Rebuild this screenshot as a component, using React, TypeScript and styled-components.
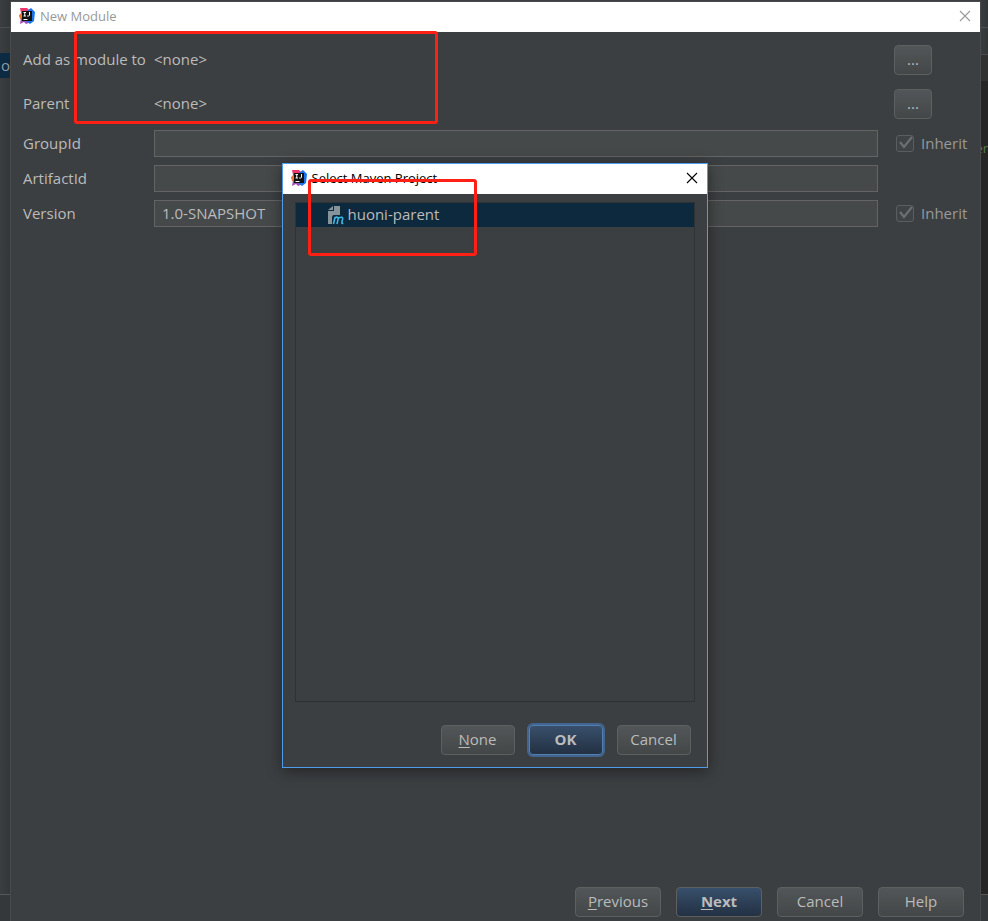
import React from "react";
import styled, { createGlobalStyle, css } from "styled-components";

const GlobalStyle = createGlobalStyle`
  *, *::before, *::after { box-sizing: border-box; }
  body {
    margin: 0;
    background: #3c3f41;
    color: #bbbbbb;
    font: 15px/20px "Open Sans", "Noto Sans", sans-serif;
  }
  button, input { font: inherit; color: inherit; margin: 0; }
`;

const Desktop = styled.div`
  position: relative;
  display: grid;
  grid-template-columns: 11px minmax(0, 1fr) 8px;
  min-height: 100vh;
  overflow: hidden;
`;

const Strip = styled.div`
  display: flex;
  flex-direction: column;
  overflow: hidden;
  background: linear-gradient(90deg, #3a3e40, #333637);
`;

const TopBar = styled.div`
  height: 28px;
  border-bottom: 1px solid #4b4e50;
`;

const NavBar = styled.div<{ $lined?: boolean }>`
  height: ${(p) => (p.$lined ? 27 : 25)}px;
  border-bottom: ${(p) => (p.$lined ? "1px solid #4b4b4b" : "0")};
`;

const TreeRow = styled.div`
  height: 25px;
  padding: 2px 0 0 1px;
  background: #0c2a41;
  color: #8f9ba3;
`;

const EditorTabs = styled.div`
  height: 26px;
  background: #313131;
`;

const Editor = styled.div`
  display: flex;
  flex: 1;
  justify-content: flex-end;
  padding-top: 57px;
  background: #262626;
  color: #547a48;
  font-size: 13px;
`;

const StatusBar = styled.div`
  height: 27px;
  margin-top: auto;
  border-top: 1px solid #575757;
  background: #34383a;
`;

const Window = styled.main`
  position: relative;
  display: flex;
  flex-direction: column;
  margin-top: 2px;
  background: #3c3f41;
  box-shadow: 0 0 0 1px #484a4c;
`;

const TitleBar = styled.header<{ $active?: boolean }>`
  display: flex;
  align-items: center;
  height: 30px;
  padding: 0 9px 2px 8px;
  background: #ffffff;
  color: ${(p) => (p.$active ? "#000000" : "#999999")};
  font-size: 13px;
`;

const Title = styled.h1`
  flex: 1;
  margin: 0 0 0 5px;
  font-size: inherit;
  font-weight: 400;
`;

const CloseButton = styled.button`
  display: flex;
  padding: 0;
  border: 0;
  background: none;
`;

const Form = styled.form`
  display: flex;
  flex: 1;
  flex-direction: column;
  padding: 13px 15px 0 12px;
`;

const FormRow = styled.div<{ $space: number }>`
  display: grid;
  grid-template-columns: 131px minmax(0, 1fr) 87px;
  align-items: center;
  margin-bottom: ${(p) => p.$space}px;
`;

const Name = styled.span`
  padding-bottom: 2px;
  white-space: nowrap;
`;

const TextField = styled.input`
  width: 100%;
  height: 27px;
  padding: 0 7px 1px;
  border: 1px solid #646464;
  border-radius: 0;
  background: #45494a;
`;

const Side = styled.div`
  display: flex;
  padding-left: 16px;
`;

const InheritLabel = styled.label`
  display: flex;
  align-items: center;
  gap: 7px;
  padding-left: 18px;
  color: #999999;
`;

const CheckBox = styled.input`
  appearance: none;
  width: 18px;
  height: 17px;
  border: 1px solid #5b5e60;
  border-radius: 3px;
  background: #3f4345;
`;

const CheckWrap = styled.span`
  position: relative;
  display: flex;
  svg { position: absolute; inset: 0; pointer-events: none; }
`;

const Button = styled.button<{ $width: number; $primary?: boolean; $focused?: boolean }>`
  width: ${(p) => p.$width}px;
  height: 30px;
  padding: 0 0 2px;
  border: 1px solid #5e6060;
  border-radius: 4px;
  background: linear-gradient(#525658, #434748);
  u { text-underline-offset: 2px; text-decoration-thickness: 1px; }
  ${(p) => p.$primary && css`
    background: linear-gradient(#384f6b, #233143);
    font-weight: 700;
  `}
  ${(p) => p.$focused && css`
    border-color: #5480b0;
    box-shadow: 0 0 0 2px #416590;
  `}
`;

const Footer = styled.footer`
  display: flex;
  justify-content: flex-end;
  gap: 15px;
  padding: 0 16px 4px;
`;

const Dialog = styled.section`
  position: absolute;
  top: 161px;
  left: 50%;
  width: 426px;
  margin-left: -214px;
  border: 1px solid #4f9ceb;
  background: #3c3f41;
  box-shadow: 0 3px 14px rgba(0, 0, 0, 0.45);
`;

const DialogBody = styled.div`
  padding: 8px 12px 12px;
`;

const ProjectList = styled.ul`
  height: 500px;
  margin: 0;
  padding: 0;
  border: 1px solid #2f3233;
  list-style: none;
`;

const ProjectItem = styled.li`
  display: flex;
  align-items: center;
  gap: 4px;
  height: 24px;
  padding-left: 32px;
  background: #0d293e;
`;

const DialogActions = styled.div`
  display: flex;
  justify-content: flex-end;
  gap: 14px;
  padding: 23px 4px 0;
`;

const Marker = styled.div<{ $x: number; $y: number; $w: number; $h: number }>`
  position: absolute;
  left: ${(p) => p.$x}px;
  top: ${(p) => p.$y}px;
  width: ${(p) => p.$w}px;
  height: ${(p) => p.$h}px;
  border: 3px solid #ff2015;
  border-radius: 3px;
  pointer-events: none;
`;

const IdeaLogo = () => (
  <svg width="16" height="16" viewBox="0 0 16 16" aria-hidden="true">
    <path d="M1 0 8 0 11 3 8 9 2 10 0 8 2 5Z" fill="#f0356b" />
    <path d="M0 7 4 5 5 12 1 11Z" fill="#ee7a2e" />
    <path d="M2 10 9 9 12 14 7 16 5 14 1 16Z" fill="#a04fb8" />
    <path d="M9 2 12 0 16 4 15 13 11 16 7 13Z" fill="#1b74e8" />
    <path d="M3 3h10v10H3z" fill="#111" />
    <path d="M4.5 4.5h2.5M5.75 4.5v3.5M4.5 8h2.5M10.5 4v3q0 1-1 1H8.2M4.5 11.5h4" fill="none" stroke="#fff" />
  </svg>
);

const CloseIcon = () => (
  <svg width="12" height="12" viewBox="0 0 12 12" aria-hidden="true">
    <path d="m1 1 10 10M11 1 1 11" fill="none" stroke="currentColor" strokeWidth="1.1" />
  </svg>
);

const MavenIcon = () => (
  <svg width="16" height="20" viewBox="0 0 16 20" overflow="visible" aria-hidden="true">
    <path d="M5 1v4H0zM6 1h6v9H6q-2 0-2 3v6H0V6h6z" fill="#87939a" />
    <path
      d="m5.5 19 1.6-7M6.8 13.3q1.3-1.3 2.5-1.1 1.2.2.8 1.9L9 19M10 13.8q1.6-1.8 3.5-1.6 1.5.2 1.1 2l-.8 3.2q-.2 1.3 1.5.8"
      fill="none" stroke="#40b6e0" strokeWidth="1.6"
    />
  </svg>
);

const Inherit = ({ id }: { id: string }) => (
  <InheritLabel htmlFor={id}>
    <CheckWrap>
      <CheckBox id={id} type="checkbox" defaultChecked disabled />
      <svg width="18" height="17" viewBox="0 0 18 17" aria-hidden="true">
        <path d="m4 7 4 5 8-10" fill="none" stroke="#6b6e70" strokeWidth="2.3" />
      </svg>
    </CheckWrap>
    <Name>Inherit</Name>
  </InheritLabel>
);

export default function App() {
  return (
    <>
      <GlobalStyle />
      <Desktop>
        <Strip>
          <TopBar />
          <NavBar />
          <TreeRow>o</TreeRow>
          <StatusBar />
        </Strip>
        <Window>
          <TitleBar>
            <IdeaLogo />
            <Title>New Module</Title>
            <CloseButton type="button" aria-label="Close"><CloseIcon /></CloseButton>
          </TitleBar>
          <Form onSubmit={(e) => e.preventDefault()}>
            <FormRow $space={14}>
              <Name>Add as module to</Name>
              <Name>&lt;none&gt;</Name>
              <Side><Button type="button" $width={38} aria-label="Choose module">...</Button></Side>
            </FormRow>
            <FormRow $space={11}>
              <Name>Parent</Name>
              <Name>&lt;none&gt;</Name>
              <Side><Button type="button" $width={38} aria-label="Choose parent">...</Button></Side>
            </FormRow>
            <FormRow $space={8}>
              <Name as="label" htmlFor="group">GroupId</Name>
              <TextField id="group" type="text" />
              <Inherit id="inherit-group" />
            </FormRow>
            <FormRow $space={8}>
              <Name as="label" htmlFor="artifact">ArtifactId</Name>
              <TextField id="artifact" type="text" />
            </FormRow>
            <FormRow $space={8}>
              <Name as="label" htmlFor="version">Version</Name>
              <TextField id="version" type="text" defaultValue="1.0-SNAPSHOT" />
              <Inherit id="inherit-version" />
            </FormRow>
          </Form>
          <Footer>
            <Button type="button" $width={86}><u>P</u>revious</Button>
            <Button type="button" $width={86} $primary><u>N</u>ext</Button>
            <Button type="button" $width={86}>Cancel</Button>
            <Button type="button" $width={86}>Help</Button>
          </Footer>
          <Marker $x={63} $y={29} $w={364} $h={93} />
          <Dialog role="dialog" aria-label="Select Maven Project">
            <TitleBar $active>
              <IdeaLogo />
              <Title as="h2">Select Maven Project</Title>
              <CloseButton type="button" aria-label="Close dialog"><CloseIcon /></CloseButton>
            </TitleBar>
            <DialogBody>
              <ProjectList>
                <ProjectItem><MavenIcon /><Name>huoni-parent</Name></ProjectItem>
              </ProjectList>
              <DialogActions>
                <Button type="button" $width={74}><u>N</u>one</Button>
                <Button type="button" $width={74} $primary $focused>OK</Button>
                <Button type="button" $width={74}>Cancel</Button>
              </DialogActions>
            </DialogBody>
            <Marker $x={25} $y={15} $w={169} $h={77} />
          </Dialog>
        </Window>
        <Strip>
          <TopBar />
          <NavBar $lined />
          <EditorTabs />
          <Editor>er</Editor>
          <StatusBar />
        </Strip>
      </Desktop>
    </>
  );
}
